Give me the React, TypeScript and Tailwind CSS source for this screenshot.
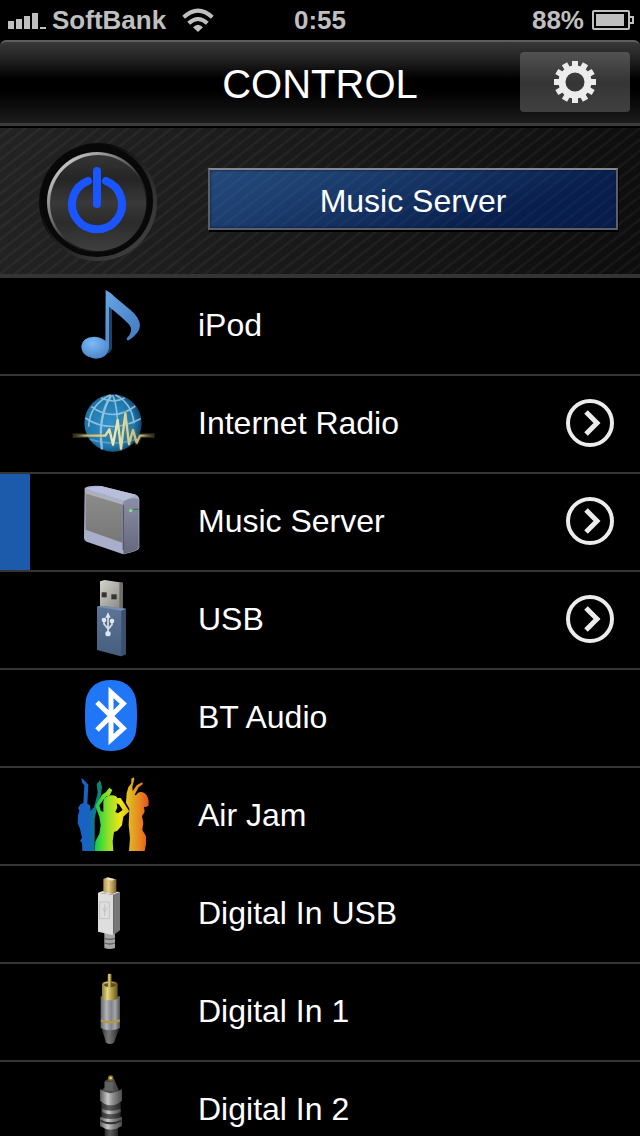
import React from 'react';

type Source = {
  id: string;
  label: string;
  icon: React.ReactNode;
  browsable?: boolean;
};

const NoteIcon = () => (
  <svg viewBox="0 -6 300 288" className="w-[100px] h-24" aria-hidden="true">
    <defs>
      <linearGradient id="note" x1="0" y1="0" x2="1" y2="1">
        <stop offset="0" stopColor="#68a6e4" />
        <stop offset="1" stopColor="#3f78bf" />
      </linearGradient>
      <radialGradient id="noteHead" cx="0.4" cy="0.3" r="0.8">
        <stop offset="0" stopColor="#7db9f5" />
        <stop offset="1" stopColor="#4580c6" />
      </radialGradient>
    </defs>
    <path d="M146 78 L156 84 V205 Q154 216 143 222 Z" fill="#263f60" />
    <path d="M137 30 Q150 36 164 50 L214 92 Q240 114 240 138 Q238 160 206 181 Q198 182 201 174 Q222 152 208 134 Q196 120 147 80 V200 H136 Z" fill="url(#note)" />
    <path d="M147 176 V204 Q142 236 107 236 Q64 230 64 198 Q68 171 102 170 Q120 170 136 182 Z" fill="url(#noteHead)" />
  </svg>
);

const GlobeIcon = () => (
  <svg viewBox="0 288 300 288" className="w-[100px] h-24" aria-hidden="true">
    <defs>
      <radialGradient id="globe" cx="0.45" cy="0.5" r="0.55">
        <stop offset="0" stopColor="#3093cb" />
        <stop offset="0.75" stopColor="#1f78ae" />
        <stop offset="1" stopColor="#10486e" />
      </radialGradient>
      <linearGradient id="wave" gradientUnits="userSpaceOnUse" x1="38" y1="0" x2="284" y2="0">
        <stop offset="0" stopColor="#6e6a38" stopOpacity="0" />
        <stop offset="0.15" stopColor="#b5b27a" />
        <stop offset="0.5" stopColor="#e6ecc8" />
        <stop offset="0.85" stopColor="#b5b27a" />
        <stop offset="1" stopColor="#6e6a38" stopOpacity="0" />
      </linearGradient>
    </defs>
    <circle cx="159" cy="429" r="86" fill="url(#globe)" />
    <g fill="none" stroke="#a9d0e6" strokeWidth="5" opacity="0.8">
      <path d="M124 354 Q160 372 194 354" />
      <path d="M94 380 Q160 428 226 378" />
      <path d="M76 414 Q150 464 242 416" />
      <path d="M90 478 Q160 500 228 478" opacity="0.5" />
      <path d="M154 345 Q112 410 126 508" strokeWidth="7" />
      <path d="M150 345 Q88 376 86 440" />
      <path d="M158 345 Q174 380 172 450" />
      <path d="M166 345 Q216 370 222 430" />
    </g>
    <path d="M38 467 H136 L148 448 L159 494 L173 420 L183 506 L196 400 L207 492 L219 450 L230 488 L240 467 H284" fill="none" stroke="#7d7936" strokeWidth="14" strokeLinejoin="round" opacity="0.35" />
    <path d="M38 467 H136 L148 448 L159 494 L173 420 L183 506 L196 400 L207 492 L219 450 L230 488 L240 467 H284" fill="none" stroke="url(#wave)" strokeWidth="7" strokeLinejoin="round" />
  </svg>
);

const DriveIcon = () => (
  <svg viewBox="0 0 300 288" className="w-[100px] h-24" aria-hidden="true">
    <defs>
      <linearGradient id="driveSide" x1="0" y1="0" x2="0" y2="1">
        <stop offset="0" stopColor="#8a8ea4" />
        <stop offset="1" stopColor="#65687c" />
      </linearGradient>
      <linearGradient id="driveFront" x1="0" y1="0" x2="0" y2="1">
        <stop offset="0" stopColor="#8c8c8c" />
        <stop offset="1" stopColor="#777" />
      </linearGradient>
    </defs>
    <path d="M74 42 Q88 33 124 36 L228 62 Q240 68 238 82 V222 Q234 232 190 241 L82 204 Q72 200 72 192 Z" fill="#a9aec9" />
    <path d="M76 43 L124 37 L228 62 L194 80 Z" fill="#b9bfdb" />
    <path d="M190 84 Q205 70 236 74 V222 Q230 232 190 240 Z" fill="url(#driveSide)" />
    <path d="M77 54 L187 88 V206 L77 167 Z" fill="url(#driveFront)" />
    <path d="M78 56 L187 89" stroke="#b2b2b2" strokeWidth="6" />
    <path d="M190 92 V228" stroke="#50536a" strokeWidth="4" />
    <circle cx="212" cy="110" r="5" fill="#7de58b" />
    <path d="M220 106 H238" stroke="#3f6f50" strokeWidth="3" />
  </svg>
);

const UsbIcon = () => (
  <svg viewBox="0 294 300 288" className="w-[100px] h-24" aria-hidden="true">
    <defs>
      <linearGradient id="usbPlug" x1="0" y1="0" x2="1" y2="1">
        <stop offset="0" stopColor="#d4d3ce" />
        <stop offset="1" stopColor="#85847f" />
      </linearGradient>
      <linearGradient id="usbBody" x1="0" y1="0" x2="0" y2="1">
        <stop offset="0" stopColor="#5c7697" />
        <stop offset="1" stopColor="#465d7d" />
      </linearGradient>
    </defs>
    <path d="M120 322 L134 318 L188 326 V408 L120 398 Z" fill="url(#usbPlug)" />
    <path d="M178 327 L188 326 V408 H178 Z" fill="#6f6e6a" />
    <rect x="125" y="355" width="15" height="15" fill="#343432" />
    <rect x="154" y="361" width="16" height="15" fill="#343432" />
    <path d="M111 398 L122 395 L198 404 V541 L182 547 L111 528 Z" fill="url(#usbBody)" />
    <path d="M184 410 L198 404 V541 L184 547 Z" fill="#3b506d" />
    <path d="M111 398 L122 395 L198 404 L184 410 Z" fill="#7690b0" />
    <path d="M144 426 V478 M132 438 V450 L144 464 M156 440 V452 L144 466" stroke="#d5dde8" strokeWidth="5" fill="none" />
    <g fill="#dfe6ef">
      <path d="M144 415 L152 431 H136 Z" />
      <circle cx="132" cy="438" r="7" />
      <circle cx="156" cy="441" r="7" />
      <circle cx="144" cy="479" r="8" />
    </g>
  </svg>
);

const BluetoothIcon = () => (
  <svg viewBox="0 0 300 288" className="w-[100px] h-24" aria-hidden="true">
    <path d="M153 30 Q211 30 227 83 Q231 100 231 137 Q231 174 226 194 Q209 243 153 243 Q96 243 79 193 Q75 174 75 137 Q75 98 79 82 Q96 30 153 30 Z" fill="#2176f5" />
    <path d="M111 97 L190 175 L153 209 V67 L190 101 L111 180" fill="none" stroke="#fff" strokeWidth="15" />
  </svg>
);

const PartyIcon = () => (
  <svg viewBox="0 294 300 288" className="w-[100px] h-24" aria-hidden="true">
    <defs>
      <linearGradient id="crowd" gradientUnits="userSpaceOnUse" x1="54" y1="0" x2="266" y2="0">
        <stop offset="0" stopColor="#1766c2" />
        <stop offset="0.2" stopColor="#14a878" />
        <stop offset="0.3" stopColor="#2ed83c" />
        <stop offset="0.42" stopColor="#8ce02c" />
        <stop offset="0.6" stopColor="#f0e416" />
        <stop offset="0.76" stopColor="#e0ac22" />
        <stop offset="0.9" stopColor="#ea7c20" />
        <stop offset="1" stopColor="#e2501e" />
      </linearGradient>
      <linearGradient id="crowdBack" gradientUnits="userSpaceOnUse" x1="54" y1="0" x2="130" y2="0">
        <stop offset="0" stopColor="#1762c4" />
        <stop offset="0.35" stopColor="#1762c4" />
        <stop offset="1" stopColor="#0c8f5a" />
      </linearGradient>
    </defs>
    <path d="M64 324 L72 330 L85 344 L82 401 L90 406 L92 422 L102 412 L113 370 L110 342 L120 331 L126 350 L123 374 L112 408 L104 448 V543 H67 L66 518 L60 512 L66 504 L60 476 L53 460 L54 436 L58 422 L54 414 L62 402 L70 400 L73 346 L66 338 Z" fill="url(#crowdBack)" />
    <path
      d="M106 408 L126 374 L138 366 L148 353 L157 360 L150 374 L134 384 L118 406 L122 422 L130 426 L130 394 Q134 376 152 376 Q168 374 172 384 L182 384 L194 402 L208 424 L190 440 L186 466 L172 482 L162 486 L158 514 L160 543 H104 L106 514 L118 492 L122 466 L118 440 Z M170 400 L172 412 L166 426 L174 430 L188 420 L178 404 Z"
      fill="url(#crowd)"
      fillRule="evenodd"
    />
    <path d="M214 326 L221 322 L223 328 L217 350 L218 364 L230 346 L246 337 L249 342 L236 352 L224 374 L228 376 Q236 362 252 368 Q268 378 266 406 Q260 414 252 410 L254 426 L246 438 L250 458 L247 480 L258 498 L258 522 L254 543 H207 L210 504 L206 466 L208 416 L198 398 L200 370 L205 352 L214 340 Z" fill="url(#crowd)" />
  </svg>
);

const DigitalUsbIcon = () => (
  <svg viewBox="0 0 300 288" className="w-[100px] h-24" aria-hidden="true">
    <defs>
      <linearGradient id="goldPlug" x1="0" x2="1">
        <stop offset="0" stopColor="#b3924a" />
        <stop offset="0.4" stopColor="#e6d08e" />
        <stop offset="1" stopColor="#7d6128" />
      </linearGradient>
    </defs>
    <path d="M133 200 H165 V246 Q149 252 133 246 Z" fill="#a5a5a5" />
    <path d="M133 217 Q149 223 165 217 M133 231 Q149 237 165 231" stroke="#5e5e5e" strokeWidth="4" fill="none" />
    <path d="M114 80 L160 86 V208 L114 197 Z" fill="#dedede" />
    <path d="M160 86 L180 78 V193 L160 208 Z" fill="#777" />
    <path d="M114 80 L132 74 L180 78 L160 86 Z" fill="#ececec" />
    <path d="M130 39 L142 34 L169 40 V80 L156 84 L130 79 Z" fill="url(#goldPlug)" />
    <path d="M138 39 L146 35 L164 40 L156 44 Z" fill="#eee8d5" />
    <path d="M119 108 H148 V158 H119 Z M134 116 V150 M128 126 L134 138 L141 124" stroke="#c2c2c2" strokeWidth="3" fill="none" />
  </svg>
);

const RcaIcon = () => (
  <svg viewBox="0 294 300 288" className="w-[100px] h-24" aria-hidden="true">
    <defs>
      <linearGradient id="rcaGold" x1="0" x2="1">
        <stop offset="0" stopColor="#8d7c35" />
        <stop offset="0.35" stopColor="#e5d689" />
        <stop offset="0.6" stopColor="#b8a24b" />
        <stop offset="1" stopColor="#64541a" />
      </linearGradient>
      <linearGradient id="rcaBody" x1="0" x2="1">
        <stop offset="0" stopColor="#66676b" />
        <stop offset="0.3" stopColor="#b3b4b8" />
        <stop offset="0.55" stopColor="#83848a" />
        <stop offset="0.75" stopColor="#a5a6aa" />
        <stop offset="1" stopColor="#4d4e52" />
      </linearGradient>
      <linearGradient id="rcaTail" x1="0" x2="1">
        <stop offset="0" stopColor="#3d3d3d" />
        <stop offset="0.4" stopColor="#777" />
        <stop offset="1" stopColor="#262626" />
      </linearGradient>
    </defs>
    <path d="M125 486 H178 L162 530 Q150 538 138 530 Z" fill="url(#rcaTail)" />
    <path d="M122 390 Q150 402 180 390 V486 Q150 500 122 486 Z" fill="url(#rcaBody)" />
    <path d="M126 354 Q128 346 150 346 Q172 346 173 354 V398 Q150 408 126 398 Z" fill="url(#rcaGold)" />
    <ellipse cx="150" cy="357" rx="18" ry="6" fill="#5c4e20" />
    <rect x="143" y="323" width="12" height="42" rx="4" fill="url(#rcaGold)" />
    <path d="M123 463 Q150 475 179 463" stroke="#b39b3c" strokeWidth="7" fill="none" />
  </svg>
);

const OpticalIcon = () => (
  <svg viewBox="0 36 300 288" className="w-[100px] h-24" aria-hidden="true">
    <defs>
      <linearGradient id="optical" x1="0" x2="1">
        <stop offset="0" stopColor="#555" />
        <stop offset="0.35" stopColor="#c9c9c9" />
        <stop offset="0.6" stopColor="#8a8a8a" />
        <stop offset="1" stopColor="#4c4c4c" />
      </linearGradient>
      <linearGradient id="opticalDark" x1="0" x2="1">
        <stop offset="0" stopColor="#2c2c2c" />
        <stop offset="0.4" stopColor="#5c5c5c" />
        <stop offset="1" stopColor="#242424" />
      </linearGradient>
    </defs>
    <rect x="134" y="232" width="40" height="60" fill="url(#opticalDark)" />
    <path d="M124 150 H182 V226 H124 Z" fill="url(#opticalDark)" />
    <path d="M120 118 Q152 136 186 118 V152 Q152 180 120 152 Z" fill="url(#optical)" />
    <path d="M134 94 L144 86 H162 L167 98 L176 120 Q152 140 126 120 L134 112 Z" fill="#4a4a4a" />
    <path d="M134 96 H160 V122 H134 Z" fill="#636363" />
    <path d="M126 176 Q152 188 182 176 V186 Q152 200 126 186 Z" fill="url(#optical)" />
    <path d="M120 200 Q152 214 186 200 V228 Q152 250 120 228 Z" fill="url(#optical)" />
    <path d="M121 212 Q152 228 185 212" stroke="#333" strokeWidth="6" fill="none" />
    <circle cx="152" cy="84" r="8" fill="#8d702c" />
    <circle cx="152" cy="84" r="4" fill="#ecd07a" />
  </svg>
);

const sources: Source[] = [
  { id: 'ipod', label: 'iPod', icon: <NoteIcon /> },
  { id: 'radio', label: 'Internet Radio', icon: <GlobeIcon />, browsable: true },
  { id: 'server', label: 'Music Server', icon: <DriveIcon />, browsable: true },
  { id: 'usb', label: 'USB', icon: <UsbIcon />, browsable: true },
  { id: 'bt', label: 'BT Audio', icon: <BluetoothIcon /> },
  { id: 'airjam', label: 'Air Jam', icon: <PartyIcon /> },
  { id: 'digital-usb', label: 'Digital In USB', icon: <DigitalUsbIcon /> },
  { id: 'digital-1', label: 'Digital In 1', icon: <RcaIcon /> },
  { id: 'digital-2', label: 'Digital In 2', icon: <OpticalIcon /> },
];

const StatusBar = () => (
  <div className="grid grid-cols-[1fr_auto_1fr] items-center h-10 shrink-0 px-2 text-[26px] leading-10 font-bold text-[#bfbfbf]">
    <div className="flex items-center">
      <svg viewBox="0 0 38 16" className="w-[38px] h-4 mt-0.5" fill="currentColor" aria-hidden="true">
        <path d="M0 8h6v8H0zM8 6h6v10H8zM16 3h6v13h-6zM24 0h6v16h-6zM32 14h6v2h-6z" />
      </svg>
      <span className="ml-1.5">SoftBank</span>
      <svg viewBox="0 0 96 72" className="w-8 h-6 ml-4" aria-hidden="true">
        <g fill="none" stroke="currentColor" strokeWidth="12">
          <path d="M5 28 Q48 -12 91 28" />
          <path d="M20 46 Q48 20 76 46" />
        </g>
        <path d="M33 58 Q48 42 63 58 L48 72 Z" fill="currentColor" />
      </svg>
    </div>
    <span>0:55</span>
    <div className="flex items-center justify-end -mr-0.5">
      <span>88%</span>
      <svg viewBox="0 0 42 20" className="w-[42px] h-5 ml-2" fill="currentColor" aria-hidden="true">
        <rect x="1" y="1" width="36" height="18" rx="1" fill="none" stroke="currentColor" strokeWidth="2" />
        <rect x="4" y="4" width="28" height="12" />
        <path d="M38 6h4v8h-4v-2h2v-4h-2z" />
      </svg>
    </div>
  </div>
);

const GearIcon = () => (
  <svg viewBox="-22 -22 44 44" className="w-11 h-11" aria-hidden="true">
    <circle r="13" fill="none" stroke="#ececec" strokeWidth="7" />
    <g fill="#ececec">
      {Array.from({ length: 12 }, (_, i) => (
        <path key={i} d="M-3 -15 V-21 H3 V-15 Z" transform={`rotate(${i * 30})`} />
      ))}
    </g>
  </svg>
);

const Header = () => (
  <header className="grid grid-cols-[1fr_auto_1fr] items-center h-[88px] shrink-0 rounded-t-md border-t-2 border-t-[#5d5d5d] border-b-2 border-b-black bg-[linear-gradient(to_bottom,#383838_0%,#222_20%,#000_44%,#000_58%,#1b1b1b_96%,#3c3c3c_97%,#3c3c3c_100%)]">
    <h1 className="col-start-2 text-[40px] leading-none text-white">CONTROL</h1>
    <button
      type="button"
      aria-label="Settings"
      className="justify-self-end flex items-center justify-center w-[110px] h-[60px] mb-1 mr-2.5 rounded-sm bg-linear-to-b from-[#525252] via-[#353535] to-[#404040]"
    >
      <GearIcon />
    </button>
  </header>
);

const PowerButton = () => (
  <button type="button" aria-label="Power" className="w-[120px] h-[120px] rounded-full">
    <svg viewBox="0 0 120 120" className="w-full h-full" aria-hidden="true">
      <defs>
        <linearGradient id="well" x1="0" y1="0" x2="1" y2="1">
          <stop offset="0.3" stopColor="#0a0a0a" />
          <stop offset="0.7" stopColor="#333" />
          <stop offset="1" stopColor="#484848" />
        </linearGradient>
        <linearGradient id="rim" x1="0.1" y1="0.1" x2="0.8" y2="0.9">
          <stop offset="0" stopColor="#d2d2d2" />
          <stop offset="0.35" stopColor="#777" />
          <stop offset="0.65" stopColor="#242424" />
          <stop offset="1" stopColor="#111" />
        </linearGradient>
        <linearGradient id="disc" x1="0" y1="0" x2="0" y2="1">
          <stop offset="0" stopColor="#353535" />
          <stop offset="0.25" stopColor="#252525" />
          <stop offset="0.5" stopColor="#393939" />
          <stop offset="0.7" stopColor="#2b2b2b" />
          <stop offset="1" stopColor="#3f3f3f" />
        </linearGradient>
      </defs>
      <circle cx="60" cy="61" r="59" fill="url(#well)" />
      <circle cx="59" cy="60" r="56" fill="#080808" />
      <circle cx="59" cy="61" r="50" fill="url(#rim)" />
      <circle cx="60" cy="62" r="48" fill="url(#disc)" />
      <path d="M50 40 A25 25 0 1 0 68 40" fill="none" stroke="#1b55ff" strokeWidth="8" strokeLinecap="round" />
      <path d="M59 30 V63" stroke="#1b55ff" strokeWidth="8" strokeLinecap="round" />
    </svg>
  </button>
);

const NowPlaying = ({ label }: { label: string }) => (
  <section className="flex items-center h-[150px] shrink-0 pl-[38px] pr-[22px] gap-[50px] border-b-4 border-b-[#343434] bg-[repeating-linear-gradient(142deg,transparent_0px,transparent_5px,rgba(255,255,255,0.05)_7px,transparent_9px),linear-gradient(105deg,#232323,#1b1b1b_40%,#0d0d0d)]">
    <PowerButton />
    <div className="flex-1 flex items-center justify-center h-[62px] mb-1 pt-1 border-2 border-[#5c5f66] border-t-[#85888c] text-[32px] leading-none text-white shadow-[1px_2px_0_#000,inset_0_0_3px_#0a1a38] bg-[repeating-linear-gradient(142deg,transparent_0px,transparent_5px,rgba(255,255,255,0.04)_7px,transparent_9px),linear-gradient(160deg,#24497a_0%,#1c3f70_25%,#081e4c_75%,#071c4a_100%)]">
      {label}
    </div>
  </section>
);

const ChevronBadge = () => (
  <svg viewBox="0 0 50 50" className="w-[50px] h-[50px] mb-0.5" fill="none" stroke="#ececec" aria-hidden="true">
    <circle cx="25" cy="25" r="22" strokeWidth="4" />
    <path d="M21 14 L32 25 L21 36" strokeWidth="5" />
  </svg>
);

const SourceRow: React.FC<{ source: Source; active: boolean; onSelect: () => void }> = ({ source, active, onSelect }) => (
  <li className="border-b-2 border-[#343434]">
    <button type="button" onClick={onSelect} aria-pressed={active} className="flex items-center w-full h-24 pr-[25px] text-left">
      <span className={active ? 'w-[30px] h-full bg-[#1c5bab]' : 'w-[30px] h-full'} />
      <span className="ml-[30px]">{source.icon}</span>
      <span className="flex-1 ml-[38px] pb-0.5 text-[32px] leading-none text-white">{source.label}</span>
      {source.browsable && <ChevronBadge />}
    </button>
  </li>
);

export default function App() {
  const [selected, setSelected] = React.useState('server');
  const current = sources.find(s => s.id === selected);

  return (
    <div className="flex flex-col h-screen bg-black font-['Liberation_Sans',Arial,sans-serif]">
      <StatusBar />
      <Header />
      <NowPlaying label={current ? current.label : ''} />
      <ul className="flex-1 min-h-0 overflow-y-auto [scrollbar-width:none]">
        {sources.map(source => (
          <SourceRow
            key={source.id}
            source={source}
            active={source.id === selected}
            onSelect={() => setSelected(source.id)}
          />
        ))}
      </ul>
    </div>
  );
}
